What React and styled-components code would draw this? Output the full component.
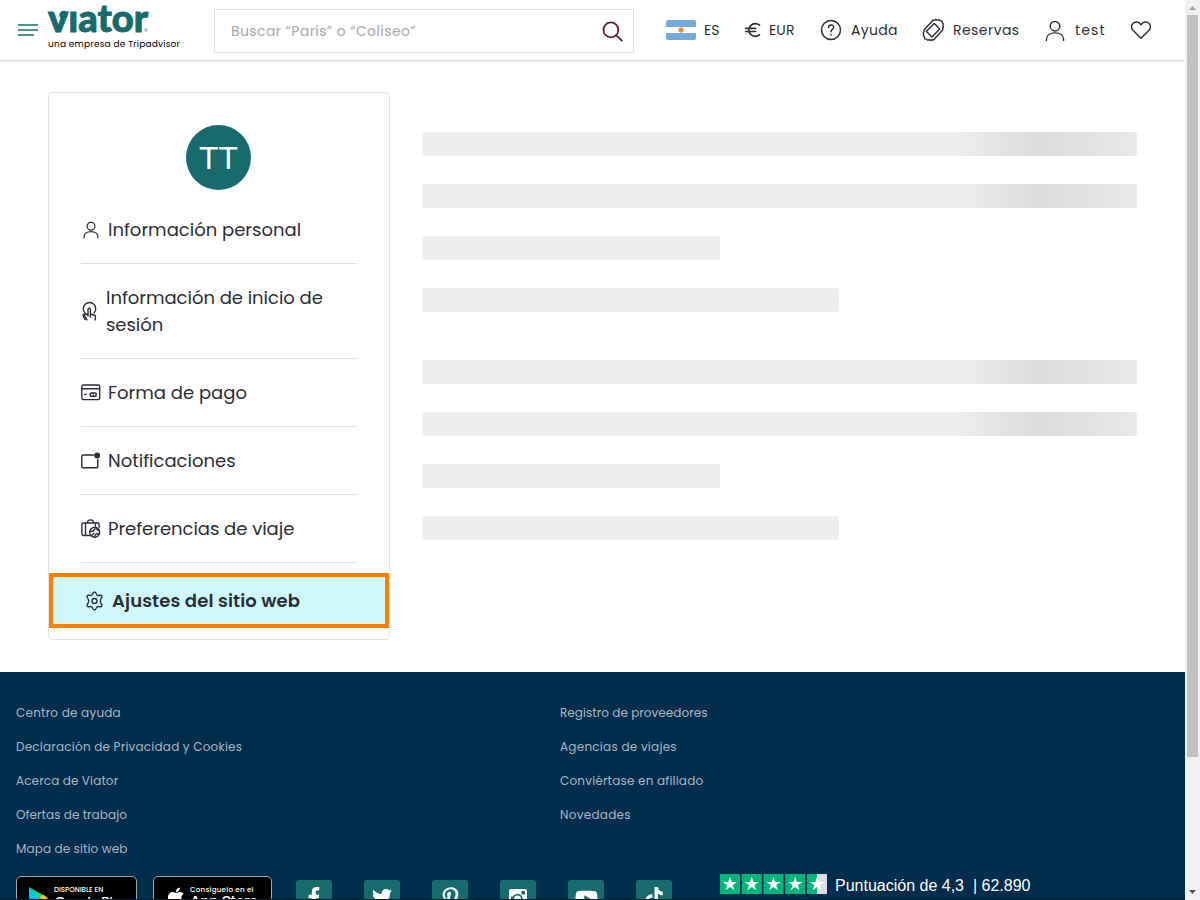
import React from 'react';
import styled, { createGlobalStyle } from 'styled-components';
import { FaFacebookF, FaTwitter, FaPinterestP, FaYoutube, FaTiktok, FaApple } from 'react-icons/fa';

const Global = createGlobalStyle`
  * { box-sizing: border-box; }
  html, body { margin: 0; height: 900px; overflow: hidden; background: #fff; }
  body {
    font-family: Poppins, Inter, "Open Sans", sans-serif;
    font-feature-settings: "cv11";
    color: #2b2e35;
  }
`;

const Window = styled.div`
  display: grid;
  grid-template-columns: 1185px 15px;
  height: 900px;
  overflow: hidden;
`;
const Page = styled.div`
  height: 900px;
  overflow: hidden;
`;
const Scrollbar = styled.div`
  display: flex;
  flex-direction: column;
  align-items: center;
  background: #f1f1f1;
  height: 900px;
`;
const ScrollArrow = styled.div`
  height: ${(p) => (p.$down ? '8px' : '15px')};
  padding-top: ${(p) => (p.$down ? '0' : '6px')};
  margin-top: ${(p) => (p.$down ? 'auto' : '0')};
  margin-bottom: ${(p) => (p.$down ? '2px' : '0')};
  svg { display: block; }
`;
const Thumb = styled.div`
  width: 11px;
  height: 742px;
  background: #c1c1c1;
`;

const Header = styled.header`
  display: flex;
  align-items: center;
  height: 60px;
  padding-left: 18px;
  box-shadow: 0 1px 2px rgba(0, 0, 0, 0.2);
`;
const Burger = styled.div`
  display: flex;
  flex-direction: column;
  gap: 3px;
  width: 30px;
`;
const BurgerLine = styled.i`
  height: 2px;
  width: ${(p) => p.$w}px;
  background: #4f9391;
`;
const Brand = styled.div`
  width: 166px;
  height: 60px;
`;
const Logo = styled.svg`
  display: block;
  width: 104px;
  height: 37px;
  overflow: visible;
  font-family: Lato, sans-serif;
  font-weight: 900;
`;
const Tagline = styled.div`
  font-size: 9px;
  line-height: 15px;
  color: #000;
  white-space: nowrap;
  letter-spacing: 0.2px;
`;
const Search = styled.div`
  display: flex;
  align-items: center;
  justify-content: space-between;
  width: 420px;
  height: 44px;
  padding: 0 10px 0 16px;
  margin-top: 2px;
  border: 1px solid #e0e0e0;
  color: #a9a9a9;
  font-size: 14px;
  letter-spacing: 0.4px;
`;
const Nav = styled.nav`
  display: grid;
  grid-template-columns: 78px 76px 101px 123px 86px 24px;
  align-items: center;
  margin-left: 32px;
  height: 60px;
`;
const NavItem = styled.div`
  display: flex;
  align-items: center;
  gap: ${(p) => p.$gap || 8}px;
  padding-left: ${(p) => p.$inset || 0}px;
  font-size: 14px;
  line-height: 20px;
  letter-spacing: ${(p) => p.$ls || 0.15}px;
  white-space: nowrap;
  svg { flex: none; }
`;

const Main = styled.main`
  display: flex;
  gap: 32px;
  padding: 32px 48px;
  height: 612px;
`;
const Card = styled.aside`
  width: 342px;
  height: 548px;
  padding-top: 32px;
  border: 1px solid #e3e3e3;
  border-radius: 4px;
`;
const Avatar = styled.div`
  width: 65px;
  height: 65px;
  margin: 0 0 26px 137px;
  border-radius: 50%;
  background: #186b6d;
  color: #fff;
  font-family: "Liberation Sans", Arial, sans-serif;
  font-size: 32px;
  line-height: 66px;
  text-align: center;
`;
const MenuItem = styled.div`
  display: flex;
  align-items: center;
  gap: ${(p) => p.$gap || 7}px;
  margin: 0 32px;
  padding: ${(p) => (p.$first ? '0' : '20px')} 0 20px;
  border-bottom: 1px solid #e0e0e0;
  font-size: 18px;
  line-height: 27px;
  letter-spacing: ${(p) => p.$ls || 0}px;
  svg { flex: none; }
`;
const ActiveItem = styled(MenuItem)`
  margin: 10px 0 0;
  padding: 10px 32px;
  border: 4px solid #ff8000;
  background: #d0f7fa;
  font-weight: 600;
`;
const Skeleton = styled.section`
  width: 715px;
  padding-top: 40px;
`;
const SkeletonGroup = styled.div`
  display: flex;
  flex-direction: column;
  gap: 28px;
  margin-bottom: 48px;
`;
const Bar = styled.div`
  width: ${(p) => p.$w}px;
  height: 24px;
  border-radius: 3px;
  background: ${(p) =>
    p.$shine
      ? 'linear-gradient(90deg, #eee 0, #eee 538px, #dcdcdc 616px, #eaeaea 715px)'
      : '#eee'};
`;

const Footer = styled.footer`
  height: 228px;
  padding: 24px 16px 0;
  background: #002d4b;
  border-bottom: 1px solid #001f38;
  color: #fff;
  overflow: hidden;
`;
const LinkColumns = styled.div`
  display: grid;
  grid-template-columns: 544px 1fr;
  height: 178px;
`;
const LinkColumn = styled.div`
  display: flex;
  flex-direction: column;
  color: #aab8c2;
  font-size: 12px;
  line-height: 34px;
`;
const FooterLink = styled.span`
  letter-spacing: ${(p) => p.$ls || 0.2}px;
`;
const FooterBottom = styled.div`
  display: flex;
  align-items: flex-start;
`;
const StoreBadge = styled.div`
  display: flex;
  flex: none;
  width: ${(p) => p.$w}px;
  height: 40px;
  margin: 2px 16px 0 0;
  padding-left: 11px;
  background: #000;
  border: 1px solid #a6a6a6;
  border-radius: 5px;
`;
const StoreIcon = styled.div`
  flex: none;
  width: ${(p) => p.$w}px;
  padding-top: 9px;
  svg { display: block; }
`;
const StoreText = styled.div`
  font-family: ${(p) => p.$family};
  font-size: 15px;
  line-height: 16px;
  font-weight: 500;
  letter-spacing: ${(p) => p.$ls}px;
  white-space: nowrap;
`;
const StoreSmall = styled.div`
  padding-top: 8px;
  font-family: Poppins, Inter, sans-serif;
  font-size: ${(p) => p.$size}px;
  line-height: 9px;
  font-weight: 500;
  letter-spacing: ${(p) => p.$ls}px;
`;
const Socials = styled.div`
  display: flex;
  gap: 32px;
  margin: 6px 48px 0 8px;
`;
const Social = styled.div`
  display: flex;
  justify-content: center;
  width: 36px;
  height: 36px;
  padding-top: 7px;
  background: #186b6d;
  border-radius: 3px;
`;
const Trust = styled.div`
  display: grid;
  grid-template-columns: 115px auto;
  font: 16px/24px "Liberation Sans", Arial, sans-serif;
`;
const TrustText = styled.span`
  white-space: pre;
`;
const TrustMark = styled.div`
  grid-column: 1 / 3;
  padding-left: 80px;
  svg { display: block; }
`;

const stroke = { fill: 'none', stroke: 'currentColor', strokeLinecap: 'round', strokeLinejoin: 'round' };

const PersonIcon = ({ w, h, sw, y = 0 }) => (
  <svg width={w} height={h} viewBox={`0 ${-y} 20 22`} overflow="visible" {...stroke} strokeWidth={sw}>
    <circle cx="10" cy="6" r="5" />
    <path d="M1 21v-1c0-4.500 4-7 9-7s9 2.500 9 7v1" />
  </svg>
);
const SearchIcon = () => (
  <svg width="21" height="21" viewBox="0 0 22 22" {...stroke} stroke="#5e1f3d" strokeWidth="1.9">
    <circle cx="9.300" cy="9.300" r="7.800" /><path d="M15 15l5.800 5.500" />
  </svg>
);
const Flag = () => (
  <svg width="30" height="20" viewBox="0 0 30 20">
    <rect width="30" height="20" rx="2" fill="#75aadb" />
    <rect y="7" width="30" height="6" fill="#fff" />
    <circle cx="15" cy="10" r="2.700" fill="#e9a13b" /><circle cx="15" cy="10" r="1.300" fill="#d68b2a" />
  </svg>
);
const EuroIcon = () => (
  <svg width="17" height="16" viewBox="0 0 17 16" {...stroke} strokeWidth="1.650">
    <path d="M15.500 3.200A6.400 6.400 0 1 0 15.500 12.800M1.600 6.300h10M1.600 9.500h10" />
  </svg>
);
const HelpIcon = () => (
  <svg width="22" height="22" viewBox="0 0 22 22" {...stroke} strokeWidth="1.500">
    <circle cx="11" cy="11" r="9.500" /><path d="M8.500 8.500c0-3.500 5.200-3.300 5.200-.3 0 2-2.700 2.200-2.700 4.600M11 15.500v.4" />
  </svg>
);
const TicketIcon = () => (
  <svg width="24" height="24" viewBox="0 0 24 24" {...stroke} strokeWidth="1.400">
    <path d="M12.200 2q1.400 1 2.600-.6 1.400 1.300 3 .2 1 1.500 3.200 1.300-.2 1.900 1.300 3.200-1.100 1.400.3 3-1.500 1.100-.8 2.700L12.600 22q-1.400-.7-2.700.6-1.400-1.500-3-.3-.9-1.600-3.200-1.400.3-1.900-1.300-3.200 1.200-1.400-.3-3 1.600-1.200.9-2.700z" />
    <path d="M13.200 5.500l5.600 5.600-8 7.800-5.500-5.600z" />
  </svg>
);
const HeartIcon = () => (
  <svg width="20" height="18.500" viewBox="0.500 0.500 21 19" {...stroke} strokeWidth="1.500">
    <path d="M11 18.500L2.800 10.300C.5 8 .6 4.700 2.500 2.800 5 .4 9 .9 11 4.300 13 .9 17 .4 19.500 2.800c1.900 1.900 2 5.200-.3 7.500z" />
  </svg>
);
const TapIcon = () => (
  <svg width="17" height="20" viewBox="0 0 17 20" {...stroke} strokeWidth="1.400">
    <path d="M4 12A6.200 6.200 0 1 1 13 12" />
    <path d="M7 15V8.200c0-1.500 2.400-1.500 2.400 0V13l3.800 1c1 .3 1.500 1 1.300 2l-.4 3M7 14l-2-1c-1.500 0-1.800.8-1.200 2L6 18.800M9.400 13v3M3 13l-1 1.500 2 4" />
  </svg>
);
const CardIcon = () => (
  <svg width="20" height="17" viewBox="0 0 20 17" {...stroke} strokeWidth="1.350">
    <rect x=".8" y="1" width="17.900" height="14.600" rx="1.300" /><path d="M1 4.700h17.500M3.500 10.400h1.700" />
    <rect x="9.200" y="8.900" width="6" height="3.400" rx="1.200" strokeWidth="1.500" /><path d="M12.200 9v3" strokeWidth=".8" />
  </svg>
);
const NoticeIcon = () => (
  <svg width="20" height="17" viewBox="0 0 20 17" {...stroke} strokeWidth="1.450">
    <path d="M12.500 3H1.800a1 1 0 0 0-1 1v10.700a1 1 0 0 0 1 1h14a1 1 0 0 0 1-1V7.600" />
    <circle cx="16.200" cy="3.500" r="2.200" fill="currentColor" />
  </svg>
);
const LuggageIcon = () => (
  <svg width="20" height="20" viewBox="0 0 20 20" {...stroke} strokeWidth="1.400">
    <path d="M9 16.500H2.200a1.300 1.300 0 0 1-1.300-1.300V5.300A1.300 1.300 0 0 1 2.200 4h14.600a1.300 1.300 0 0 1 1.300 1.300v3M4.500 4v12.500M14.500 4v3M6.300 4C6.300-.2 12.700-.2 12.700 4" />
    <circle cx="13.700" cy="13.200" r="5" /><path d="M9.500 12.500l3-.5 2-3.500M10.500 16.800l2.500-2.500M13.500 18l1.300-2.700 3.200-.8M15.500 9.500l1.700 2" />
  </svg>
);
const GearIcon = () => (
  <svg width="19" height="20" viewBox="0 0 19 20" {...stroke} strokeWidth="1.350">
    <path d="M7.600 3.100Q8.300 1 9.500 1t1.900 2.100q.6 1.700 2.500 1.300 2.200-.5 3 .6.600 1.200-1 2.800-1.300 2.200 0 4.400 1.600 1.600 1 2.800-.8 1.100-3 .6-1.900-.4-2.500 1.300Q10.700 19 9.500 19t-1.900-2.100q-.6-1.700-2.500-1.300-2.200.5-3-.6-.6-1.200 1-2.800 1.300-2.200 0-4.400-1.600-1.600-1-2.800.8-1.100 3-.6 1.900.4 2.500-1.300z" />
    <circle cx="9.500" cy="10" r="2.500" />
  </svg>
);
const PlayIcon = () => (
  <svg width="22" height="24" viewBox="0 0 22 24">
    <path d="M1 1v22l11-11z" fill="#00c3ff" /><path d="M1 1l14 8-3.500 3.500z" fill="#00e070" />
    <path d="M15 8.500l5 3.500-5 3.500-3.500-3.500z" fill="#ffce00" /><path d="M1 23l14-8-3.500-3.500z" fill="#ff3a44" />
  </svg>
);
const InstagramIcon = () => (
  <svg width="20" height="20" viewBox="0 0 20 20">
    <rect x="1" y="2" width="18" height="18" rx="2" fill="#fff" />
    <circle cx="9.500" cy="12" r="5.200" fill="#186b6d" /><circle cx="9.500" cy="12" r="3.400" fill="#fff" />
    <rect x="13.500" y="4" width="3.500" height="3.500" fill="#186b6d" />
    <path d="M3 9.500h3v2H5v5H3z" fill="#186b6d" />
  </svg>
);
const starPath = 'M10 2.800l1.700 5.100h5.400l-4.400 3.200 1.700 5.200L10 13.100l-4.400 3.200 1.700-5.200-4.400-3.200h5.400z';
const Stars = () => (
  <svg width="108" height="20" viewBox="0 0 108 20">
    {[0, 1, 2, 3, 4].map((i) => (
      <g key={i} transform={`translate(${i * 21.75} 0)`}>
        <rect width="20" height="20" fill={i === 4 ? '#dcdce6' : '#00b67a'} />
        {i === 4 && <rect width="10" height="20" fill="#00b67a" />}
        <path d={starPath} fill="#fff" />
      </g>
    ))}
  </svg>
);

const leftLinks = [
  ['Centro de ayuda', 0.22],
  ['Declaración de Privacidad y Cookies', 0.21],
  ['Acerca de Viator', 0.12],
  ['Ofertas de trabajo', 0.06],
  ['Mapa de sitio web', 0.12],
];
const rightLinks = [
  ['Registro de proveedores', 0.05],
  ['Agencias de viajes', 0.25],
  ['Conviértase en afiliado', 0.2],
  ['Novedades', 0.28],
];

function LoadingGroup() {
  return (
    <SkeletonGroup>
      <Bar $w={715} $shine /><Bar $w={715} $shine /><Bar $w={298} /><Bar $w={417} />
    </SkeletonGroup>
  );
}

export default function App() {
  return (
    <>
      <Global />
      <Window>
        <Page>
          <Header>
            <Burger><BurgerLine $w={20} /><BurgerLine $w={20} /><BurgerLine $w={16} /></Burger>
            <Brand>
              <Logo viewBox="0 0 104 37">
                <text x="0" y="31.800" fontSize="37.500" textLength="100" lengthAdjust="spacingAndGlyphs" fill="#186b6d" stroke="#186b6d" strokeWidth=".9">vıator</text>
                <circle cx="15.500" cy="15" r="4.200" fill="#186b6d" />
                <circle cx="98" cy="30" r="1.300" fill="none" stroke="#186b6d" strokeWidth=".5" />
              </Logo>
              <Tagline>una empresa de Tripadvisor</Tagline>
            </Brand>
            <Search><span>Buscar “París” o “Coliseo”</span><SearchIcon /></Search>
            <Nav>
              <NavItem><Flag />ES</NavItem>
              <NavItem><EuroIcon />EUR</NavItem>
              <NavItem $gap={9} $ls={0.3}><HelpIcon />Ayuda</NavItem>
              <NavItem $ls={0.45}><TicketIcon />Reservas</NavItem>
              <NavItem $gap={10} $ls={1.1} $inset={1}><PersonIcon w={20} h={21} sw={1.5} y={0.5} />test</NavItem>
              <NavItem $inset={1}><HeartIcon /></NavItem>
            </Nav>
          </Header>
          <Main>
            <Card>
              <Avatar>TT</Avatar>
              <MenuItem $first><PersonIcon w={20} h={17} sw={1.6} y={0.8} />Información personal</MenuItem>
              <MenuItem $gap={8} $ls={-0.03}><TapIcon />Información de inicio de sesión</MenuItem>
              <MenuItem><CardIcon />Forma de pago</MenuItem>
              <MenuItem><NoticeIcon />Notificaciones</MenuItem>
              <MenuItem $ls={-0.03}><LuggageIcon />Preferencias de viaje</MenuItem>
              <ActiveItem $gap={8} $ls={0.13}><GearIcon />Ajustes del sitio web</ActiveItem>
            </Card>
            <Skeleton><LoadingGroup /><LoadingGroup /></Skeleton>
          </Main>
          <Footer>
            <LinkColumns>
              <LinkColumn>{leftLinks.map(([t, ls]) => <FooterLink key={t} $ls={ls}>{t}</FooterLink>)}</LinkColumn>
              <LinkColumn>{rightLinks.map(([t, ls]) => <FooterLink key={t} $ls={ls}>{t}</FooterLink>)}</LinkColumn>
            </LinkColumns>
            <FooterBottom>
              <StoreBadge $w={121}>
                <StoreIcon $w={26}><PlayIcon /></StoreIcon>
                <StoreText $family="Lato, sans-serif" $ls={-0.6}><StoreSmall $size={7} $ls={0}>DISPONIBLE EN</StoreSmall>Google Play</StoreText>
              </StoreBadge>
              <StoreBadge $w={119}>
                <StoreIcon $w={25}><FaApple size={22} /></StoreIcon>
                <StoreText $family="Inter, sans-serif" $ls={-0.4}><StoreSmall $size={7.2} $ls={0.22}>Consíguelo en el</StoreSmall>App Store</StoreText>
              </StoreBadge>
              <Socials>
                <Social><FaFacebookF size={20} /></Social>
                <Social><FaTwitter size={20} /></Social>
                <Social><FaPinterestP size={21} /></Social>
                <Social><InstagramIcon /></Social>
                <Social><FaYoutube size={23} /></Social>
                <Social><FaTiktok size={20} /></Social>
              </Socials>
              <Trust>
                <Stars /><TrustText>Puntuación de 4,3  | 62.890</TrustText>
                <TrustMark><svg width="14" height="14" viewBox="0 3 20 20"><path d={starPath} fill="#00b67a" /></svg></TrustMark>
              </Trust>
            </FooterBottom>
          </Footer>
        </Page>
        <Scrollbar>
          <ScrollArrow><svg width="7" height="4"><path d="M0 4L3.500 0 7 4z" fill="#a3a3a3" /></svg></ScrollArrow>
          <Thumb />
          <ScrollArrow $down><svg width="7" height="4"><path d="M0 0L3.500 4 7 0z" fill="#505050" /></svg></ScrollArrow>
        </Scrollbar>
      </Window>
    </>
  );
}
